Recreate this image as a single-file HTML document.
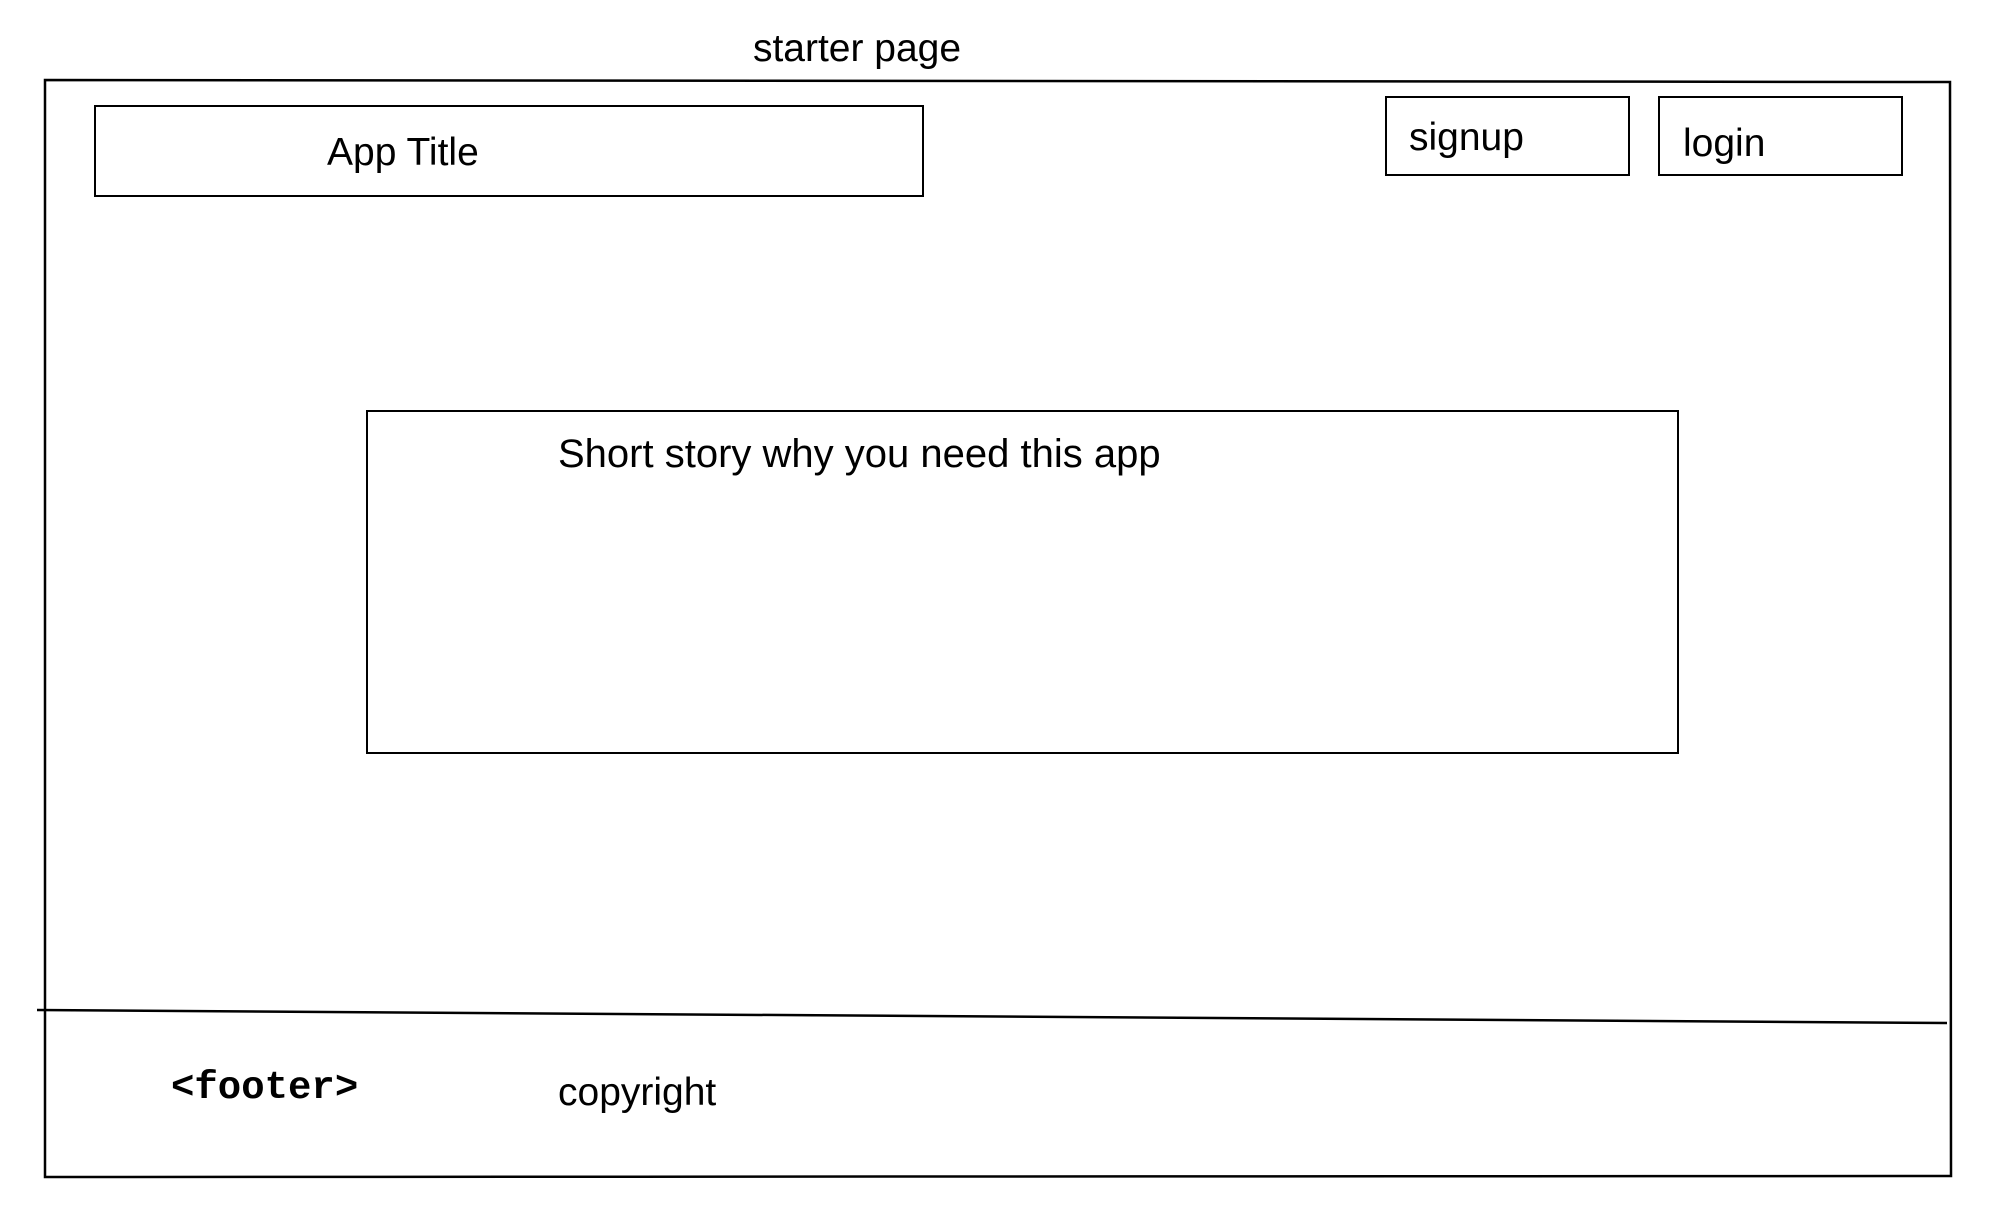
<!DOCTYPE html>
<html><head><meta charset="utf-8"><style>
html,body{margin:0;padding:0;background:#fff;}
svg{display:block}
text{font-family:"Liberation Sans",Arial,sans-serif;fill:#000}
</style></head><body>
<svg width="2005" height="1231" viewBox="0 0 2005 1231" xmlns="http://www.w3.org/2000/svg">
<text x="857" y="61" font-size="39" text-anchor="middle">starter page</text>
<g fill="none" stroke="#000" stroke-width="2.5">
<path d="M45 80 L1950 82 L1951 1176 L45 1177 Z"/>
<path d="M37 1010 L1947 1023"/>
</g>
<g fill="none" stroke="#000" stroke-width="2">
<rect x="95" y="106" width="828" height="90"/>
<rect x="1386" y="97" width="243" height="78"/>
<rect x="1659" y="97" width="243" height="78"/>
<rect x="367" y="411" width="1311" height="342"/>
</g>
<text x="327" y="165" font-size="39">App Title</text>
<text x="1409" y="150" font-size="39">signup</text>
<text x="1683" y="156" font-size="39">login</text>
<text x="558" y="467" font-size="40">Short story why you need this app</text>
<text x="171" y="1098" font-size="39" font-weight="bold" style="font-family:'Liberation Mono',monospace">&lt;footer&gt;</text>
<text x="558" y="1105" font-size="39">copyright</text>
</svg>
</body></html>
